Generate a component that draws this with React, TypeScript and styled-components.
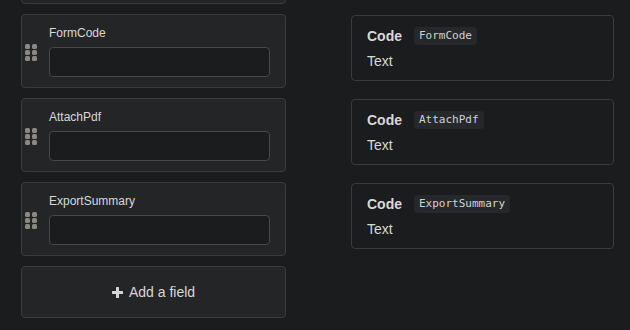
import React from 'react';
import styled, { createGlobalStyle } from 'styled-components';

const GlobalStyle = createGlobalStyle`
    html, body {
        margin: 0;
        padding: 0;
        background: #1b1c1e;
        overflow: hidden;
    }
    body {
        font-family: "Liberation Sans", Arial, sans-serif;
        color: #d6d6d6;
    }
`

const fields = ['FormCode', 'AttachPdf', 'ExportSummary']

const Page = styled.div`
    width: 630px;
    height: 330px;
    overflow: hidden;
`

const Board = styled.div`
    display: grid;
    grid-template-columns: 265px 263px;
    column-gap: 65px;
    row-gap: 10px;
    padding-left: 21px;
    margin-top: -70px;
`

const FieldCard = styled.div`
    box-sizing: border-box;
    height: 74px;
    display: flex;
    align-items: center;
    background: #242527;
    border: 1px solid #3a3b3d;
    border-radius: 4px;
    padding: 11px 15px 10px 3px;
`

const Grip = styled.div`
    width: 14px;
    height: 17px;
    margin-right: 10px;
    margin-top: 1px;
    display: flex;
    color: #8b8882;
`

const FieldBody = styled.div`
    flex: 1;
    display: flex;
    flex-direction: column;
    gap: 7px;
`

const Label = styled.label`
    font-size: 12px;
    line-height: 14px;
    min-height: 14px;
    color: #d8d8d8;
`

const Input = styled.input`
    box-sizing: border-box;
    height: 30px;
    width: 100%;
    background: #1b1c1e;
    border: 1px solid #47484b;
    border-radius: 4px;
    outline: none;
    color: #d8d8d8;
    padding: 0 8px;
`

const Spacer = styled.div``

const Preview = styled.div`
    box-sizing: border-box;
    height: 66px;
    margin-top: 1px;
    border: 1px solid #3a3b3d;
    border-radius: 4px;
    padding: 11px 15px 0;
    display: flex;
    flex-direction: column;
    gap: 8px;
`

const PreviewHead = styled.div`
    display: flex;
    align-items: center;
    gap: 12px;
    height: 18px;
`

const Title = styled.span`
    font-weight: bold;
    font-size: 14px;
    line-height: 16px;
    color: #d8d8d8;
`

const CodeTag = styled.code`
    font-family: "DejaVu Sans Mono", monospace;
    font-size: 11px;
    line-height: 18px;
    padding: 0 5px;
    border-radius: 4px;
    background: #26282b;
    color: #d2d2d2;
`

const PreviewText = styled.div`
    font-size: 14px;
    line-height: 16px;
    color: #d8d8d8;
`

const AddButton = styled.button`
    box-sizing: border-box;
    height: 52px;
    display: flex;
    align-items: center;
    justify-content: center;
    gap: 6px;
    background: #242527;
    border: 1px solid #3a3b3d;
    border-radius: 4px;
    color: #d6d6d6;
    font-family: "Liberation Sans", Arial, sans-serif;
    font-size: 14px;
    cursor: pointer;
`

const GripIcon = () => (
    <svg width="14" height="17" viewBox="0 0 14 17" fill="currentColor">
        {[0, 6, 12].map(y => (
            <React.Fragment key={y}>
                <rect x="0" y={y} width="5" height="5" rx="1.5" />
                <rect x="7" y={y} width="5" height="5" rx="1.5" />
            </React.Fragment>
        ))}
    </svg>
)

const PlusIcon = () => (
    <svg width="11" height="11" viewBox="0 0 11 11" fill="#d6d6d6">
        <rect x="4" y="0" width="3" height="11" rx="0.5" />
        <rect x="0" y="4" width="11" height="3" rx="0.5" />
    </svg>
)

const Field = ({ name }: { name?: string }) => (
    <FieldCard>
        <Grip><GripIcon /></Grip>
        <FieldBody>
            <Label>{name}</Label>
            <Input />
        </FieldBody>
    </FieldCard>
)

export default function App() {
    return (
        <Page>
            <GlobalStyle />
            <Board>
                {/* scrolled-past field, only its bottom edge shows */}
                <Field />
                <Spacer />
                {fields.map(name => (
                    <React.Fragment key={name}>
                        <Field name={name} />
                        <Preview>
                            <PreviewHead>
                                <Title>Code</Title>
                                <CodeTag>{name}</CodeTag>
                            </PreviewHead>
                            <PreviewText>Text</PreviewText>
                        </Preview>
                    </React.Fragment>
                ))}
                <AddButton>
                    <PlusIcon />
                    Add a field
                </AddButton>
            </Board>
        </Page>
    )
}
